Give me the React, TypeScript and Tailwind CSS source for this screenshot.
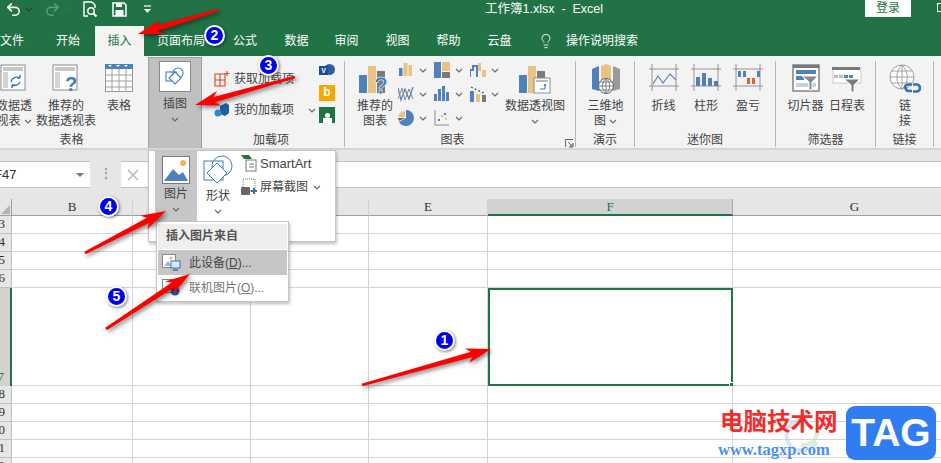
import { Undo2, Redo2, Lightbulb } from 'lucide-react';
import type { ReactNode } from 'react';

const Chev = ({ className = '' }: { className?: string }) => (
  <svg width="8" height="5" viewBox="0 0 8 5" className={`shrink-0 ${className}`}>
    <path d="M1 1l3 3 3-3" fill="none" stroke="#666" strokeWidth="1.1" />
  </svg>
);

const BLUE = '#4f81bd';
const TAN = '#eac282';
const GR = '#7a7a7a';

function Sheet({ q }: { q?: boolean }) {
  return (
    <svg width="28" height="28" viewBox="0 0 28 28">
      <rect x="1" y="1" width="24" height="25" fill="#fff" stroke="#8a8a8a" />
      <rect x="3" y="3" width="20" height="4" fill="#c8c8c8" />
      <rect x="3" y="8" width="5" height="16" fill="#d4d4d4" />
      {q ? (
        <text x="19" y="27" fontSize="20" fontWeight="700" fill="#3f7fbd" textAnchor="middle" fontFamily="Liberation Sans">?</text>
      ) : (
        <path d="M11 18a6 6 0 0 1 9-4M20 14v-3M20 14h-3M20 18a6 6 0 0 1-8 3M12 21v3M12 21h3" fill="none" stroke="#2f75b5" strokeWidth="1.4" />
      )}
    </svg>
  );
}

function TableIcon() {
  return (
    <svg width="28" height="28" viewBox="0 0 28 28">
      <rect x="0.5" y="0.5" width="27" height="27" fill="#fff" stroke="#9a9a9a" />
      <rect x="0" y="0" width="28" height="5" fill="#4f81bd" />
      <path d="M0 11h28M0 17h28M0 23h28M7 5v23M14 5v23M21 5v23" stroke="#a0a0a0" strokeWidth="1" />
      <path d="M3 1l2 2 2-2M11 1l2 2 2-2M19 1l2 2 2-2" fill="#fff" />
    </svg>
  );
}

function IllusIcon() {
  return (
    <svg width="20" height="20" viewBox="0 0 20 20">
      <rect x="1" y="5" width="10" height="9" fill="none" stroke="#3f7fbd" strokeWidth="1.1" />
      <circle cx="13" cy="6" r="5" fill="none" stroke="#3f7fbd" strokeWidth="1.1" />
      <path d="M10 5l6 6-6 6-6-6z" fill="#fff" stroke="#3f7fbd" strokeWidth="1.1" />
    </svg>
  );
}

function ChartIcon({ k }: { k: string }) {
  const body: Record<string, ReactNode> = {
    bar: (<><rect x="1" y="6" width="3.5" height="8" fill={BLUE} /><rect x="5.5" y="1" width="4" height="13" fill={TAN} /><rect x="10.5" y="3" width="3.5" height="11" fill={TAN} /></>),
    tree: (<><rect x="0" y="0" width="7" height="16" fill={BLUE} /><rect x="8" y="0" width="8" height="9" fill={TAN} /><rect x="8" y="10" width="8" height="6" fill={GR} /></>),
    water: (<><path d="M0 15V8h3V4h4v11" fill="none" stroke={BLUE} strokeWidth="2" /><rect x="8" y="1" width="3" height="8" fill={TAN} /><rect x="12" y="8" width="4" height="7" fill={TAN} /></>),
    line: (<><path d="M0 2l3 12 4-11 4 10 4-12" fill="none" stroke={BLUE} strokeWidth="1.2" /><path d="M0 13l4-11 3 12 4-11 4 10" fill="none" stroke="#8a8a8a" strokeWidth="1" /></>),
    col: (<><rect x="0" y="8" width="3" height="7" fill={BLUE} /><rect x="4" y="3" width="3" height="12" fill={BLUE} /><rect x="8" y="0" width="3" height="15" fill={BLUE} /><rect x="12" y="6" width="3" height="9" fill={BLUE} /></>),
    stock: (<><rect x="0" y="5" width="4" height="11" fill={BLUE} /><rect x="6" y="8" width="4" height="8" fill={TAN} /><rect x="12" y="9" width="4" height="7" fill={GR} /><path d="M1 1l6 3 7 3" stroke="#555" strokeWidth="1.3" fill="none" strokeDasharray="2 2" /></>),
    pie: (<><path d="M8 8V0a8 8 0 1 1-7 12z" fill={BLUE} /><path d="M7 1v6H0a7 7 0 0 1 7-6z" fill={TAN} /><path d="M0 8h7l-6 3z" fill="#666" /></>),
    scat: (<><path d="M1 0v15h14" fill="none" stroke="#8a8a8a" /><rect x="4" y="9" width="2" height="2" fill={BLUE} /><rect x="7" y="5" width="2" height="2" fill={TAN} /><rect x="10" y="3" width="2" height="2" fill={BLUE} /><rect x="11" y="8" width="2" height="2" fill={TAN} /></>),
  };
  return <svg width="16" height="16" viewBox="0 0 16 16" className="shrink-0">{body[k]}</svg>;
}

function ChartBars({ badge }: { badge: 'q' | 'p' }) {
  return (
    <svg width="32" height="30" viewBox="0 0 32 30">
      <rect x="0" y="11" width="8" height="18" fill={BLUE} />
      <rect x="9" y="2" width="8" height="27" fill={TAN} />
      <rect x="18" y="7" width="8" height="22" fill={GR} />
      {badge === 'q' ? (
        <text x="22" y="30" fontSize="23" fontWeight="700" fill="#3f7fbd" stroke="#fff" strokeWidth="0.5" textAnchor="middle" fontFamily="Liberation Sans">?</text>
      ) : (
        <g>
          <rect x="15" y="14" width="16" height="15" fill="#fff" stroke="#8a8a8a" />
          <rect x="17" y="16" width="12" height="2" fill="#bbb" />
          <path d="M21 25h5v-4M25 22l1-2 1 2" fill="none" stroke="#2f75b5" />
        </g>
      )}
    </svg>
  );
}

function Map3D() {
  return (
    <svg width="30" height="30" viewBox="0 0 30 30">
      <path d="M1 5l7-3v25l-7-2z" fill={BLUE} />
      <path d="M10 2l5-2 5 2v18H10z" fill={TAN} />
      <path d="M22 2l7 3v20l-7 2z" fill="#9a9a9a" />
      <circle cx="15" cy="22" r="7.5" fill="#fff" stroke="#666" />
      <path d="M7.5 22h15M15 14.5v15M9 18h12M9 26h12M15 14.5c-5 4-5 11 0 15M15 14.5c5 4 5 11 0 15" fill="none" stroke="#666" strokeWidth="0.8" />
    </svg>
  );
}

function Spark({ k }: { k: 'line' | 'col' | 'wl' }) {
  return (
    <svg width="30" height="28" viewBox="0 0 30 28">
      <path d="M3 0v27M27 0v27M0 5h30M0 22h30" stroke="#8a8a8a" strokeWidth="0.9" fill="none" />
      {k === 'line' && <path d="M4 20l5-8 5 7 7-9 6 6" fill="none" stroke={BLUE} strokeWidth="1.1" />}
      {k === 'col' && (<><rect x="5" y="13" width="4" height="9" fill={BLUE} /><rect x="11" y="9" width="4" height="13" fill={BLUE} /><rect x="17" y="14" width="4" height="8" fill={BLUE} /><rect x="23" y="17" width="4" height="5" fill={BLUE} /></>)}
      {k === 'wl' && (<><rect x="5" y="7" width="3" height="6" fill={BLUE} /><rect x="10" y="7" width="3" height="6" fill={BLUE} /><rect x="14" y="14" width="3" height="6" fill="#d9603b" /><rect x="19" y="14" width="3" height="6" fill="#d9603b" /><rect x="24" y="7" width="3" height="6" fill={BLUE} /></>)}
    </svg>
  );
}

function Slicer() {
  return (
    <svg width="28" height="28" viewBox="0 0 28 28">
      <rect x="1" y="1" width="26" height="26" fill="#fff" stroke="#7a7a7a" strokeWidth="1.4" />
      <rect x="1" y="1" width="26" height="3" fill="#7a7a7a" />
      <rect x="4" y="6" width="20" height="4" fill={BLUE} />
      <rect x="4" y="12" width="8" height="4" fill={BLUE} />
      <rect x="4" y="19" width="20" height="4" fill="#bfd2e8" />
      <path d="M10 12h16l-6 6v8h-3v-8z" fill="#8a8a8a" stroke="#fff" />
    </svg>
  );
}

function Timeline() {
  return (
    <svg width="30" height="28" viewBox="0 0 30 28">
      <rect x="1" y="4" width="28" height="15" fill="#fff" stroke="#c8c8c8" />
      <rect x="0" y="3" width="28" height="3" fill="#7a7a7a" />
      <rect x="2" y="11" width="4" height="3" fill="#bbb" /><rect x="7" y="11" width="4" height="3" fill="#bbb" /><rect x="12" y="11" width="4" height="3" fill={BLUE} /><rect x="17" y="11" width="4" height="3" fill={BLUE} />
      <path d="M12 15h16l-6 6v7h-3v-7z" fill="#7a7a7a" stroke="#fff" />
    </svg>
  );
}

function LinkIcon() {
  return (
    <svg width="32" height="30" viewBox="0 0 32 30">
      <circle cx="13" cy="13" r="12" fill="#fff" stroke="#9a9a9a" />
      <path d="M1 13h24M13 1v24M3 7h20M3 19h20M13 1c-7 7-7 17 0 24M13 1c7 7 7 17 0 24" fill="none" stroke="#9a9a9a" strokeWidth="0.9" />
      <path d="M16 24a3.5 3.5 0 0 1 3.5-3.5H23M23 27h-3.5a3.5 3.5 0 0 1-3-3M24 20.5h3.5a3.5 3.5 0 0 1 0 7H24" fill="none" stroke="#2f75b5" strokeWidth="2.6" />
    </svg>
  );
}

function Big({ w, icon, lines, chev, ml, inlineChev }: { w: number; icon: ReactNode; lines: string[]; chev?: boolean; ml?: number; inlineChev?: boolean }) {
  return (
    <div className="flex flex-col items-center shrink-0" style={{ width: w, marginLeft: ml }}>
      <div className="h-[35px] flex items-start justify-center mt-[3px]">{icon}</div>
      {lines.map((l, i) => (
        <div key={l} className="h-[15px] leading-[15px] whitespace-nowrap flex items-center gap-[3px]">
          {l}
          {inlineChev && i === lines.length - 1 && <Chev />}
        </div>
      ))}
      {chev && <div className="h-[15px] flex items-center"><Chev /></div>}
    </div>
  );
}

function Group({ w, label, children, labelClass = '', sep = true }: { w: number; label: string; children: ReactNode; labelClass?: string; sep?: boolean }) {
  return (
    <div className={`shrink-0 h-[86px] flex flex-col ${sep ? 'border-r border-[#b5b5b5]' : ''}`} style={{ width: w }}>
      <div className="flex-1 flex items-start min-h-0">{children}</div>
      <div className={`h-[17px] -mb-[2px] leading-[17px] text-center ${labelClass}`}>{label}</div>
    </div>
  );
}

function SmallChart({ k }: { k: string }) {
  return (
    <div className="h-[24px] w-[36px] flex items-center gap-[5px]">
      <ChartIcon k={k} />
      <Chev />
    </div>
  );
}

const ARROWS = [
  [362, 385, 491, 349],
  [218, 10, 138, 34],
  [295, 77, 195, 105],
  [85, 253, 166, 211],
  [106, 329, 190, 274],
];

function arrowPoints([x1, y1, x2, y2]: number[]) {
  const L = Math.hypot(x2 - x1, y2 - y1);
  const u = [(x2 - x1) / L, (y2 - y1) / L];
  const n = [-u[1], u[0]];
  const pt = (d: number, s: number) => `${x1 + u[0] * d + n[0] * s},${y1 + u[1] * d + n[1] * s}`;
  return [pt(0, 1.4), pt(L - 20, 2.8), pt(L - 25, 7.5), pt(L, 0), pt(L - 25, -7.5), pt(L - 20, -2.8), pt(0, -1.4)].join(' ');
}

const BADGES = [
  { n: '1', cls: 'left-[434px] top-[330px]' },
  { n: '2', cls: 'left-[204px] top-[25px]' },
  { n: '3', cls: 'left-[258px] top-[55px]' },
  { n: '4', cls: 'left-[98px] top-[196px]' },
  { n: '5', cls: 'left-[106px] top-[286px]' },
];

const ROWS = [43, 44, 45, 46, 47, 48, 49, 50, 51, 52];
const COLS = ['B', 'C', 'D', 'E', 'F', 'G'];

function SheetGrid() {
  return (
    <div className="absolute left-0 top-[199px] w-[977px] grid grid-cols-[12px_121px_118px_118px_119px_245px_244px] font-['Liberation_Serif',serif] text-[13px] text-[#333]">
      <div className="h-[17px] bg-[#e6e6e6] border-r border-b border-[#9f9f9f] relative overflow-hidden">
        <div className="absolute right-[1px] bottom-[1px] w-0 h-0 border-l-[9px] border-l-transparent border-b-[9px] border-b-[#b4b4b4]" />
      </div>
      {COLS.map(c => (
        <div key={c} className={`h-[17px] leading-[16px] text-center border-r ${c === 'F' ? 'bg-[#d2d2d2] border-r-[#a8a8a8] border-b-2 border-b-[#217346] text-[#217346]' : 'bg-[#e6e6e6] border-r-[#d0d0d0] border-b border-b-[#9f9f9f]'}`}>{c}</div>
      ))}
      {ROWS.map(r => {
        const on = r === 47;
        return [
          <div key={`h${r}`} className={`flex items-end justify-end pr-[6px] overflow-hidden ${on ? 'h-[98px] bg-[#d2d2d2] border-r-2 border-[#217346] text-[#217346] border-b-0' : 'h-[18px] bg-[#e6e6e6] border-r border-b border-[#c0c0c0]'}`}>{r}</div>,
          ...COLS.map(c => (
            <div key={`${c}${r}`} className={`relative ${on ? 'h-[98px]' : 'h-[18px]'} ${on && c === 'F' ? 'border-2 border-[#217346]' : 'border-r border-b border-[#d4d4d4]'} bg-white`}>
              {on && c === 'F' && <div className="absolute -right-[4px] -bottom-[4px] w-[6px] h-[6px] bg-[#217346] border border-white" />}
            </div>
          )),
        ];
      })}
    </div>
  );
}

export default function App() {
  return (
    <div className="relative w-[941px] h-[463px] overflow-hidden bg-white font-['Liberation_Sans','Noto_Sans_CJK_SC',sans-serif] text-[12px] text-[#444]">
      {/* title bar */}
      <div className="h-[26px] bg-[#217346] flex items-start text-white relative">
        <div className="flex items-center h-[18px] pl-[5px]">
          <Undo2 size={17} strokeWidth={2.2} />
          <Chev className="ml-[3px] invert brightness-200" />
          <Redo2 size={17} strokeWidth={2.2} className="ml-[11px] text-[#5b9a7a]" />
          <Chev className="ml-[3px] opacity-40" />
          <svg width="16" height="17" viewBox="0 0 16 17" className="ml-[10px]" fill="none" stroke="#fff" strokeWidth="1.4">
            <path d="M10 1H2v14h4M10 1l3 3v3" />
            <circle cx="9" cy="10" r="3.2" />
            <path d="M11.5 12.5l3 3" strokeWidth="2" />
          </svg>
          <svg width="15" height="15" viewBox="0 0 15 15" className="ml-[14px]">
            <path d="M1 1h11l2 2v11H1z" fill="none" stroke="#fff" strokeWidth="1.5" />
            <rect x="4" y="1" width="6" height="4" fill="#fff" />
            <rect x="3.5" y="8" width="8" height="6" fill="#fff" />
          </svg>
          <svg width="7" height="8" viewBox="0 0 7 8" className="ml-[17px]">
            <path d="M0 1h7" stroke="#fff" strokeWidth="1.2" />
            <path d="M0 4h7L3.5 8z" fill="#fff" />
          </svg>
        </div>
        <div className="absolute left-[485px] top-[1px] text-[12.5px] leading-[17px] whitespace-nowrap">工作簿1.xlsx&nbsp; -&nbsp; Excel</div>
        <div className="absolute left-[865px] top-0 w-[46px] h-[17px] bg-white text-[#217346] text-center leading-[16px]">登录</div>
        <div className="absolute left-[937px] top-[3px] w-[8px] h-[9px] border border-white" />
      </div>

      {/* tabs */}
      <div className="h-[30px] bg-[#217346] flex text-white text-center leading-[31px]">
        <div className="w-[24px] shrink-0">文件</div>
        <div className="w-[52px] ml-[18px] shrink-0">开始</div>
        <div className="w-[49px] ml-[1px] shrink-0 bg-[#f3f3f3] text-[#217346]">插入</div>
        <div className="w-[74px] shrink-0">页面布局</div>
        <div className="w-[54px] shrink-0">公式</div>
        <div className="w-[49px] shrink-0">数据</div>
        <div className="w-[51px] shrink-0">审阅</div>
        <div className="w-[51px] shrink-0">视图</div>
        <div className="w-[51px] shrink-0">帮助</div>
        <div className="w-[51px] shrink-0">云盘</div>
        <div className="w-[40px] shrink-0 flex items-center justify-center ml-[1px]">
          <Lightbulb size={16} strokeWidth={1.3} />
        </div>
        <div className="shrink-0 whitespace-nowrap">操作说明搜索</div>
      </div>

      {/* ribbon */}
      <div className="h-[94px] bg-[#f3f3f3] border-b-2 border-[#d5d5d5] flex pt-[5px] overflow-hidden">
        <Group w={148} label="表格" sep={false} labelClass="pr-[5px]">
          <Big ml={-10} w={48} icon={<Sheet />} lines={['数据透', '视表']} inlineChev />
          <Big w={56} icon={<Sheet q />} lines={['推荐的', '数据透视表']} />
          <Big w={50} icon={<TableIcon />} lines={['表格']} />
        </Group>
        <div className="w-[54px] h-[94px] -mt-[4px] shrink-0 bg-[#c0c0c0] border border-[#9f9f9f] flex flex-col items-center pt-[3px]">
          <div className="w-[32px] h-[31px] bg-white border border-[#8a8a8a] flex items-center justify-center"><IllusIcon /></div>
          <div className="mt-[5px] h-[15px] leading-[15px]">插图</div>
          <div className="h-[15px] flex items-center"><Chev /></div>
        </div>
        <Group w={143} label="加载项" labelClass="pr-[4px]">
          <div className="w-[114px] pl-[12px] shrink-0 flex flex-col pt-[10px] gap-[15px]">
            <div className="flex items-center gap-[4px] h-[16px] whitespace-nowrap">
              <svg width="16" height="16" viewBox="0 0 16 16" className="shrink-0" fill="none" stroke="#d2491f" strokeWidth="1.1"><path d="M1 3h10v12H1zM6 3v12M1 9h10M13 0v5M10.500 2.500h5" /></svg>
              获取加载项
            </div>
            <div className="flex items-center gap-[4px] h-[16px] whitespace-nowrap">
              <svg width="16" height="16" viewBox="0 0 16 16" className="shrink-0"><path d="M6 4l6-3 3 2v8l-4 3-5-2z" fill="#1f5fa5" /><circle cx="4" cy="11" r="3.5" fill="#2f86d9" /></svg>
              我的加载项
              <Chev className="ml-[10px]" />
            </div>
          </div>
          <div className="flex flex-col gap-[6px] ml-[3px] mt-[2px]">
            <div className="w-[16px] h-[16px] relative"><div className="absolute left-[5px] top-[1px] w-[11px] h-[11px] rounded-full bg-[#2d5fa8]" /><div className="absolute left-0 top-[3px] w-[9px] h-[9px] bg-[#1a4c94] text-white text-[7px] leading-[9px] text-center font-bold">V</div></div>
            <div className="w-[16px] h-[16px] bg-[#f5a800] text-white text-[12px] leading-[15px] text-center font-bold">b</div>
            <div className="w-[16px] h-[16px] bg-[#217346] flex flex-col items-center justify-end"><div className="w-[5px] h-[5px] rounded-full bg-white" /><div className="w-[9px] h-[5px] bg-white" /></div>
          </div>
        </Group>
        <Group w={231} label="图表" labelClass="pr-[15px] relative">
          <Big ml={12} w={36} icon={<ChartBars badge="q" />} lines={['推荐的', '图表']} />
          <div className="ml-[5px] grid grid-cols-3 gap-x-0 shrink-0 w-[108px] -mt-[3px]">
            <SmallChart k="bar" /><SmallChart k="tree" /><SmallChart k="water" />
            <SmallChart k="line" /><SmallChart k="col" /><SmallChart k="stock" />
            <SmallChart k="pie" /><SmallChart k="scat" /><div />
          </div>
          <Big w={60} ml={-1} icon={<ChartBars badge="p" />} lines={['数据透视图']} chev />
          <div />
        </Group>
        <Group w={59} label="演示">
          <Big w={59} icon={<Map3D />} lines={['三维地', '图']} inlineChev />
        </Group>
        <Group w={141} label="迷你图">
          <Big ml={7} w={43} icon={<Spark k="line" />} lines={['折线']} />
          <Big w={42} icon={<Spark k="col" />} lines={['柱形']} />
          <Big w={42} icon={<Spark k="wl" />} lines={['盈亏']} />
        </Group>
        <Group w={100} label="筛选器">
          <Big ml={9} w={41} icon={<Slicer />} lines={['切片器']} />
          <Big w={42} icon={<Timeline />} lines={['日程表']} />
        </Group>
        <Group w={58} label="链接">
          <Big w={58} icon={<LinkIcon />} lines={['链', '接']} />
        </Group>
      </div>

      {/* launcher for chart group */}
      <svg width="9" height="9" viewBox="0 0 9 9" className="absolute left-[565px] top-[139px]" fill="none" stroke="#666">
        <path d="M0.500 8V0.500H8M8 4v4H4M3 3l4 4M7 5v2H5" />
      </svg>

      {/* formula bar */}
      <div className="h-[49px] bg-[#e6e6e6] flex pt-[11px] items-start">
        <div className="w-[90px] h-[27px] bg-white border-y border-[#c4c4c4] flex items-center justify-between pr-[6px] shrink-0 overflow-hidden">
          <span className="-ml-[6px] text-[13px] text-[#333]">F47</span>
          <div className="w-0 h-0 border-x-[4px] border-x-transparent border-t-[4px] border-t-[#777]" />
        </div>
        <div className="w-[31px] text-center text-[#999] leading-[24px] font-bold shrink-0">⋮</div>
        <div className="flex-1 h-[27px] bg-white border-y border-[#c4c4c4] flex items-center pl-[6px]">
          <svg width="12" height="12" viewBox="0 0 12 12"><path d="M1 1l10 10M11 1L1 11" stroke="#bbb" strokeWidth="1.6" /></svg>
        </div>
      </div>

      <SheetGrid />

      {/* illustrations dropdown */}
      <div className="absolute left-[148px] top-[150px] w-[188px] h-[92px] bg-white border border-[#c6c6c6] shadow-[1px_2px_3px_rgba(0,0,0,0.25)] flex items-start pl-[6px]">
        <div className="w-[42px] h-[70px] bg-[#c6c6c6] flex flex-col items-center pt-[5px] shrink-0">
          <svg width="28" height="28" viewBox="0 0 28 28">
            <rect x="0.500" y="0.500" width="27" height="27" fill="#fff" stroke="#7a7a7a" />
            <circle cx="21" cy="7" r="3" fill="#eeb45a" />
            <path d="M2 25l9-12 6 6 4-3 5 9z" fill="#4f81bd" />
          </svg>
          <div className="h-[15px] leading-[15px] mt-[3px]">图片</div>
          <div className="h-[15px] flex items-center"><Chev /></div>
        </div>
        <div className="w-[42px] flex flex-col items-center pt-[4px] shrink-0">
          <svg width="30" height="34" viewBox="0 0 30 34" fill="none" stroke="#3f7fbd" strokeWidth="1">
            <rect x="1" y="6" width="19" height="19" />
            <circle cx="19" cy="11" r="10" />
            <path d="M14 8l10 10-10 10-10-10z" fill="#fff" />
          </svg>
          <div className="h-[15px] leading-[15px]">形状</div>
          <div className="h-[15px] flex items-center"><Chev /></div>
        </div>
        <div className="flex flex-col ml-[2px] pt-[3px] gap-[5px]">
          <div className="flex items-center gap-[3px] h-[18px] text-[13px] leading-none">
            <svg width="16" height="18" viewBox="0 0 16 18"><path d="M0 1h8l3 4H3z" fill="#217346" /><rect x="5" y="6" width="10" height="11" fill="#fff" stroke="#777" /><path d="M8 10h5M8 13h5" stroke="#777" /></svg>
            SmartArt
          </div>
          <div className="flex items-center gap-[3px] h-[18px] mt-[1px] whitespace-nowrap">
            <svg width="16" height="18" viewBox="0 0 16 18"><rect x="2" y="1" width="12" height="12" fill="none" stroke="#777" strokeDasharray="1 1" /><rect x="0" y="9" width="9" height="8" rx="1" fill="#666" /><path d="M10 13h6M13 10v6" stroke="#2f75b5" strokeWidth="2" /></svg>
            屏幕截图
            <Chev className="ml-[2px]" />
          </div>
        </div>
      </div>

      {/* picture source menu */}
      <div className="absolute left-[156px] top-[221px] w-[133px] h-[81px] bg-white border border-[#c6c6c6] shadow-[1px_2px_3px_rgba(0,0,0,0.25)] pt-[2px] px-[1px]">
        <div className="h-[25px] bg-[#eeeeee] pl-[8px] leading-[25px] font-bold text-[#555]">插入图片来自</div>
        <div className="mt-[1px] h-[25px] bg-[#c6c6c6] flex items-center pl-[4px] gap-[8px]">
          <svg width="19" height="17" viewBox="0 0 19 17"><rect x="0.500" y="0.500" width="13" height="13" fill="#fff" stroke="#888" /><circle cx="9" cy="4" r="1.500" fill="#eeb45a" /><path d="M2 12l4-5 4 5z" fill="#9db9d9" /><rect x="9" y="7" width="9" height="7" fill="#dfeaf5" stroke="#2f75b5" /><path d="M11 16h5" stroke="#2f75b5" strokeWidth="1.500" /></svg>
          <span className="whitespace-nowrap">此设备(<u>D</u>)...</span>
        </div>
        <div className="h-[25px] flex items-center pl-[4px] gap-[8px] text-[#777]">
          <svg width="19" height="17" viewBox="0 0 19 17"><rect x="0.500" y="0.500" width="13" height="13" fill="#fff" stroke="#888" /><circle cx="13" cy="12" r="4.500" fill="#1f5fa5" /></svg>
          <span className="whitespace-nowrap">联机图片(<u>O</u>)...</span>
        </div>
      </div>

      {/* watermark */}
      <svg width="40" height="42" viewBox="0 0 40 42" className="absolute left-[781px] top-[414px]" fill="none" strokeWidth="4" opacity="0.55">
        <path d="M22 5C8 6 2 20 8 30c5 8 20 10 28-2" stroke="#b9d3ea" />
        <path d="M36 14c2 10-6 18-16 17" stroke="#bfe0b0" />
      </svg>
      <div className="absolute left-[720px] top-[407px] text-[23.500px] leading-[30px] font-bold text-[#f32c2c] whitespace-nowrap">电脑技术网</div>
      <div className="absolute left-[718px] top-[441px] text-[16.500px] leading-[18px] font-bold font-['Liberation_Serif',serif] text-[#4a90f5] whitespace-nowrap">www.tagxp.com</div>
      <div className="absolute left-[846px] top-[406px] w-[90px] h-[54px] rounded-[9px] bg-[#2f7df0] text-white text-[39px] leading-[54px] font-bold text-center">TAG</div>

      {/* annotations */}
      <svg width="941" height="463" viewBox="0 0 941 463" className="absolute inset-0 pointer-events-none">
        {ARROWS.map((a, i) => (
          <polygon key={i} points={arrowPoints(a)} fill="#f00" className="drop-shadow-[2px_2px_2px_rgba(0,0,0,0.5)]" />
        ))}
      </svg>
      {BADGES.map(b => (
        <div key={b.n} className={`absolute ${b.cls} w-[21px] h-[21px] rounded-full bg-[#0000f0] border-2 border-white shadow-[1px_1px_3px_rgba(0,0,0,0.5)] text-white text-[14px] leading-[17px] text-center font-bold`}>{b.n}</div>
      ))}
    </div>
  );
}
